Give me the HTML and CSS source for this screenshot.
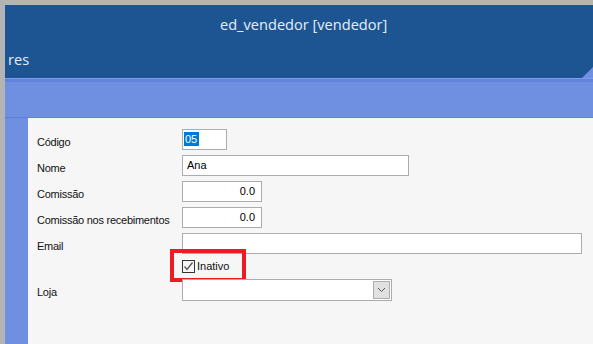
FILE: index.html
```html
<!DOCTYPE html>
<html lang="pt">
<head>
<meta charset="utf-8">
<title>ed_vendedor</title>
<link rel="stylesheet" href="styles.css">
</head>
<body>
<div class="window">
  <div class="header">
    <div class="title">ed_vendedor [vendedor]</div>
    <div class="tab">res</div>
    <div class="corner"></div>
  </div>
  <div class="band"></div>
  <div class="main">
    <div class="strip"></div>
    <div class="content">
      <div class="form">
        <div class="label">Código</div>
        <div class="field"><div class="input w-code"><span class="sel">05</span></div></div>

        <div class="label">Nome</div>
        <div class="field"><div class="input w-nome">Ana</div></div>

        <div class="label">Comissão</div>
        <div class="field"><div class="input w-num num">0.0</div></div>

        <div class="label">Comissão nos recebimentos</div>
        <div class="field"><div class="input w-num num">0.0</div></div>

        <div class="label">Email</div>
        <div class="field"><div class="input w-email"></div></div>

        <div class="label"></div>
        <div class="field check-row">
          <span class="checkbox">
            <svg width="11" height="11" viewBox="0 0 11 11"><path d="M1.5 5.5 L4 8.5 L9.5 1.5" fill="none" stroke="#555" stroke-width="1.3"/></svg>
          </span>
          <span class="check-label">Inativo</span>
          <div class="highlight"></div>
        </div>

        <div class="label">Loja</div>
        <div class="field">
          <div class="select">
            <span class="drop">
              <svg width="9" height="6" viewBox="0 0 9 6"><path d="M1 1 L4.5 4.5 L8 1" fill="none" stroke="#555" stroke-width="1"/></svg>
            </span>
          </div>
        </div>
      </div>
    </div>
  </div>
</div>
</body>
</html>
```
FILE: styles.css
```css
* { box-sizing: border-box; }
html, body { margin: 0; padding: 0; }
body {
  background: #b4b4b4;
  width: 593px;
  height: 344px;
  overflow: hidden;
  font-family: "Liberation Sans", Arial, sans-serif;
}
.window {
  margin: 5px 0 0 5px;
  height: 339px;
  display: flex;
  flex-direction: column;
}
.header {
  position: relative;
  height: 73px;
  background: #1c5591;
  color: #e6edf7;
  font-family: "Open Sans", "Noto Sans", sans-serif;
  font-size: 14.6px;
  line-height: 20px;
}
.title {
  padding: 9px 0 0 215px;
}
.tab {
  padding: 15px 0 0 3px;
}
.corner {
  position: absolute;
  right: 0;
  bottom: 0;
  width: 11px;
  height: 11px;
  background: #6f8fe1;
  clip-path: polygon(0 100%, 100% 0, 100% 100%);
}
.band {
  height: 40px;
  background: linear-gradient(#7f9de6 0, #7f9de6 1px, #6283dd 1px, #6283dd 4px, #6f8fe1 4px, #6f8fe1 39px, #5f80dc 39px);
}
.main {
  flex: 1;
  display: flex;
}
.strip {
  width: 23px;
  background: #6f8fe1;
}
.content {
  flex: 1;
  background: #f6f6f6;
  padding: 11px 0 0 9px;
}
.form {
  display: grid;
  grid-template-columns: 145px 1fr;
  grid-auto-rows: 21px;
  row-gap: 5px;
  font-size: 11px;
  letter-spacing: -0.25px;
  color: #111;
}
.form > .check-row, .form > .label:nth-last-child(4) { height: 15px; }
.form { grid-template-rows: 21px 21px 21px 21px 21px 15px 22px; }
.label {
  padding-top: 7px;
  line-height: 13px;
  white-space: nowrap;
}
.field { position: relative; }
.input {
  height: 21px;
  border: 1px solid #acacac;
  background: #fff;
  line-height: 19px;
  padding: 0 4px;
  color: #000;
  letter-spacing: 0;
}
.w-code { width: 45px; padding-left: 1px; }
.w-nome { width: 227px; }
.w-num { width: 80px; text-align: right; padding-right: 6px; }
.w-email { width: 400px; }
.sel {
  display: inline-block;
  background: #0078d7;
  color: #fff;
  line-height: 14px;
  padding: 0 2px 0 1px;
  vertical-align: 0;
}
.check-row {
  display: flex;
  align-items: flex-start;
  gap: 2px;
}
.checkbox {
  margin-top: 1px;
  width: 13px;
  height: 13px;
  border: 1px solid #333;
  background: #f6f6f6;
  display: flex;
  align-items: center;
  justify-content: center;
}
.check-label {
  line-height: 13px;
  margin-top: 1px;
  letter-spacing: 0;
}
.highlight {
  position: absolute;
  left: -12px;
  top: -10px;
  width: 76px;
  height: 33px;
  border: 4px solid #ed1c24;
}
.select {
  width: 210px;
  height: 22px;
  border: 1px solid #acacac;
  background: #fff;
  display: flex;
  justify-content: flex-end;
  align-items: center;
  padding-right: 1px;
}
.drop {
  width: 17px;
  height: 18px;
  background: #e1e1e1;
  border: 1px solid #adadad;
  display: flex;
  align-items: center;
  justify-content: center;
}
```
